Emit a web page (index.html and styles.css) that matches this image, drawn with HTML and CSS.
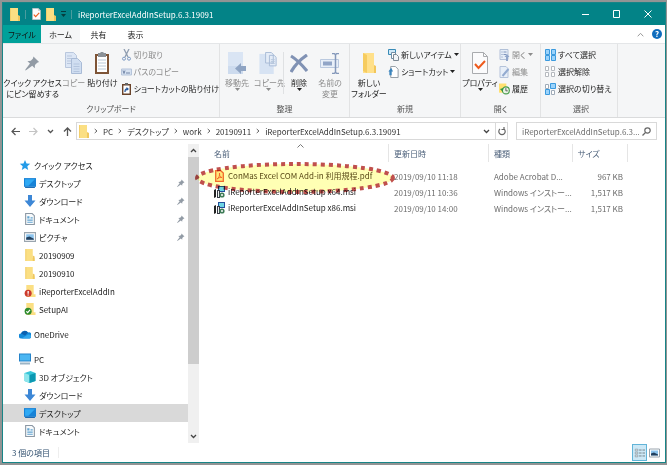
FILE: index.html
```html
<!DOCTYPE html>
<html lang="ja">
<head>
<meta charset="utf-8">
<title>iReporterExcelAddInSetup.6.3.19091</title>
<link rel="stylesheet" href="styles.css">
</head>
<body>
<svg class="defs" aria-hidden="true">
  <symbol id="folder" viewBox="0 0 10 13"><path d="M0 0h8v10h2v3H0z" fill="#fbdf83"/><path d="M8 7l2 1v5H8z" fill="#efc75e"/><path d="M0 0h1v13H0z" fill="#f3cf6c"/></symbol>
  <symbol id="pin" viewBox="0 0 16 16"><path d="M9 1l6 6-2 .6-2.400 2.400-.2 3.500L7.700 11 1.500 15.500 0 16l.8-1.600L5.300 8.600 2.600 6l3.600-.3L8.500 3.300z" fill="#929ba5"/></symbol>
  <symbol id="desktop" viewBox="0 0 11 11"><path d="M0 1h11v8H0z" fill="#1883d7"/><path d="M1 2h9L4 8H1z" fill="#2fa9f4"/><path d="M1 9h9v1H1z" fill="#0a5fae"/></symbol>
  <symbol id="down" viewBox="0 0 11 12"><path d="M3.500 0h4v5.500H11L5.500 12 0 5.500h3.500z" fill="#3d87d6"/></symbol>
  <symbol id="doc" viewBox="0 0 9 11"><path d="M.5.500h6l2 2v8h-8z" fill="#f7fafc" stroke="#8c98a4"/><path d="M2 3h2v2H2zM2 6h5v1H2zM2 8h5v1H2zM5 4h2v1H5z" fill="#62a3cf"/></symbol>
  <symbol id="picture" viewBox="0 0 11 9"><path d="M.5.500h10v8H.5z" fill="#fff" stroke="#9aa5ae"/><path d="M2 2h7v5H2z" fill="#8cc4ee"/><path d="M2 5l3-1 4 2v1H2z" fill="#23405e"/></symbol>
  <symbol id="star" viewBox="0 0 12 12"><path d="M6 1l1.500 3.500 3.700.3-2.900 2.500.9 3.700L6 9l-3.200 2 .9-3.700L.8 4.800l3.700-.3z" fill="#239be8"/></symbol>
  <symbol id="cloud" viewBox="0 0 12 9"><path d="M2.500 9A2.500 2.500 0 012 4a4 4 0 017-1 3 3 0 011.500 6z" fill="#1188d9"/><path d="M2 4a4 4 0 017-1L6 6z" fill="#0960b0"/><path d="M2.500 9L9 5a2.300 2.300 0 013 2c0 1-1 2-1.500 2z" fill="#31a8ee"/></symbol>
  <symbol id="pc" viewBox="0 0 12 11"><path d="M0 0h12v8H0z" fill="#2583c9"/><path d="M1 1h10v6H1z" fill="#4bb6f2"/><path d="M1 9h10v2H1z" fill="#9db5c6"/></symbol>
  <symbol id="cube" viewBox="0 0 11 12"><path d="M0 2l6-2 5 2v8l-6 2-5-2z" fill="#36c5d8"/><path d="M0 2l5 2v8l-5-2z" fill="#8ee6ec"/><path d="M5 4l6-2v8l-6 2z" fill="#0c98b2"/></symbol>
  <symbol id="msi" viewBox="0 0 11 12"><path d="M4 0h7v6H4z" fill="#254f9b"/><path d="M5 1h5v4H5z" fill="#6ed5e4"/><path d="M0 4l2-1v8l-2 1z" fill="#222"/><path d="M3 4h3v8H3z" fill="#353a44"/><path d="M4 5h1v6H4z" fill="#eee"/><circle cx="8" cy="9" r="2.600" fill="#3f7c58"/><circle cx="8" cy="9" r="1" fill="#fff"/></symbol>
  <symbol id="pdf" viewBox="0 0 9 12"><path d="M.7.700h5L8.300 3v8.300H.7z" fill="#ffe6a8" stroke="#f2683c" stroke-width="1.300"/><path d="M2 9c2-1 3-4 2.500-6C4 6 5.500 7.500 7 7.500 5.500 7 3.500 7.800 2 9z" fill="none" stroke="#f2683c"/></symbol>
  <symbol id="check-doc" viewBox="0 0 16 22"><path d="M.5.500h11l4 4v17H.5z" fill="#fbfbfc" stroke="#a9abae"/><path d="M11.500.500v4h4" fill="none" stroke="#a9abae"/><path d="M3 12l3.500 4L13 9" fill="none" stroke="#ee5a1c" stroke-width="2"/></symbol>
  <symbol id="copy" viewBox="0 0 17 22"><path d="M.5.500h8l3 3v12H.5z" fill="#dce6f5" stroke="#b9c7dd"/><path d="M2 4h5M2 6.500h7M2 9h4M2 11.500h4" stroke="#b9c7dd"/><path d="M6.500 6.500h6l4 4v11h-10z" fill="#d0def1" stroke="#a9bbd6"/><path d="M8.500 12h6M8.500 14.500h6M8.500 17h6M8.500 19.500h6" stroke="#b4c5de"/></symbol>
  <symbol id="paste" viewBox="0 0 16 22"><path d="M1 2h14v20H1z" fill="#7e5436"/><path d="M3 4h10v16H3z" fill="#fff"/><path d="M4 1h2l1-1h2l1 1h2v4H4z" fill="#8b9197"/><path d="M4 8h8M4 11h8M4 14h8M4 17h8" stroke="#b9c9d8"/></symbol>
  <symbol id="scissors" viewBox="0 0 9 12"><path d="M2 0l4 8M7 0L3 8" stroke="#8f9db0" stroke-width="1.300"/><circle cx="2" cy="9.700" r="1.500" fill="none" stroke="#7f9cc4"/><circle cx="7" cy="9.700" r="1.500" fill="none" stroke="#7f9cc4"/></symbol>
  <symbol id="path" viewBox="0 0 11 7"><path d="M.5.500h10v6H.5z" fill="#d6e1f0" stroke="#b5c4da"/><path d="M2 2l1 3 1-3M5 4.500h4" fill="none" stroke="#7286a7"/></symbol>
  <symbol id="shortcut-paste" viewBox="0 0 9 12"><path d="M.7 1.700h7.600v9.600H.7z" fill="#fff" stroke="#6a432a" stroke-width="1.400"/><path d="M3 0h3v2H3z" fill="#666"/><path d="M3 9c0-2 .5-3 2-3" fill="none" stroke="#24579c" stroke-width="1.300"/><path d="M4.500 4L7 6 4.500 8z" fill="#24579c"/></symbol>
  <symbol id="move" viewBox="0 0 18 22"><path d="M0 0h15v22H0z" fill="#dae5f4"/><path d="M15 14v8H0v-8z" fill="#cddbee"/><path d="M7 16.500l6-5.500v3h5v5h-5v3z" fill="#8fa4c3"/></symbol>
  <symbol id="copy-to" viewBox="0 0 18 23"><path d="M0 2h15v21H0z" fill="#d7e3f3"/><path d="M6.500.500h6l2 2v9h-8zM10.500 3.500h5l2 2v9h-7z" fill="#e4ecf7" stroke="#a8bbd6"/><path d="M12 8h4M12 10h4M12 12h4" stroke="#b6c6dc"/></symbol>
  <symbol id="delete" viewBox="0 0 18 19"><path d="M1 2c5 3 11 9 16 15M17 1C11 5 5 11 1 18" fill="none" stroke="#8092b4" stroke-width="3.200"/></symbol>
  <symbol id="rename" viewBox="0 0 20 21"><path d="M.5 6.500h18v8H.5z" fill="#e8eff8" stroke="#bac9df"/><path d="M3 8.500h9v4H3z" fill="#91a5c7"/><path d="M12 .5h2l1.500 1L17 .5h2M15.500 1v18.500M12 20.500h2l1.500-1 1.500 1h2" fill="none" stroke="#8498ba" stroke-width="1.500"/></symbol>
  <symbol id="big-folder" viewBox="0 0 13 20"><path d="M0 0h11v16l2 1v3H0z" fill="#ffe08a"/><path d="M0 0l4 2v18l-4-2z" fill="#f6cc5f"/><path d="M11 12l2 1v7h-2z" fill="#f2c65b"/></symbol>
  <symbol id="new-item" viewBox="0 0 11 12"><path d="M.5.500h7v5h-7z" fill="#cfe9f8" stroke="#398bb7"/><path d="M3.500 3.500h4v6h-4z" fill="#fff" stroke="#708da4"/><path d="M5.500 5.500h3l2 2v4h-5z" fill="#f1f4f7" stroke="#7d8994"/></symbol>
  <symbol id="new-shortcut" viewBox="0 0 11 13"><path d="M2.500.500h5l3 3v9h-8z" fill="#fff" stroke="#8c969e"/><path d="M0 6l3-4 2 4H3.500v4H1V6z" fill="#3a84bd"/></symbol>
  <symbol id="open" viewBox="0 0 10 12"><path d="M.5.500h8v10h-8z" fill="#e5edf7" stroke="#b2c1d8"/><path d="M2 3h1M4 3h3M2 5.500h1M4 5.500h3M2 8h1" stroke="#7f95bb"/><path d="M7.500 5L10 8H8.500v4h-2V8H5z" fill="#8fa5c9"/></symbol>
  <symbol id="edit" viewBox="0 0 10 12"><path d="M.5.500h6l2 2v9h-8z" fill="#e8eff8" stroke="#b4c3da"/><path d="M3 10l6-7" stroke="#93abd0" stroke-width="2"/></symbol>
  <symbol id="history" viewBox="0 0 12 12"><path d="M0 0h8v10H0z" fill="#ffe070"/><circle cx="7.500" cy="7.500" r="3.800" fill="#e8f3e5" stroke="#499c4b" stroke-width="1.300"/><path d="M7.500 5v3h2" fill="none" stroke="#555"/><path d="M1 6l4-1-1 4z" fill="#2f9640"/></symbol>
  <symbol id="all" viewBox="0 0 11 12"><path d="M.5.500h4v5h-4zM6.500.500h4v5h-4zM.5 6.500h4v5h-4zM6.500 6.500h4v5h-4z" fill="#9bd3fb" stroke="#3b9ade"/></symbol>
  <symbol id="none" viewBox="0 0 11 12"><path d="M.5.500h3v4h-3zM6.500.500h3v4h-3zM.5 6.500h3v4h-3zM6.500 6.500h3v4h-3z" fill="#fff" stroke="#b5b9be"/></symbol>
  <symbol id="invert" viewBox="0 0 11 12"><path d="M.5 1.500h3v4h-3zM6.500 7.500h3v4h-3z" fill="#fff" stroke="#9fabb8"/><path d="M5.500.500h5v5h-5zM.5 6.500h4v5h-4z" fill="#9bd3fb" stroke="#3b9ade"/></symbol>
  <symbol id="back" viewBox="0 0 9 8"><path d="M9 4H1M4.500.500L1 4l3.500 3.500" fill="none" stroke="currentColor" stroke-width="1.200"/></symbol>
  <symbol id="chev-down" viewBox="0 0 7 5"><path d="M1 1l2.500 2.500L6 1" fill="none" stroke="currentColor" stroke-width="1.300"/></symbol>
  <symbol id="chev-right" viewBox="0 0 4 6"><path d="M.7 1L3 3 .7 5" fill="none" stroke="currentColor"/></symbol>
  <symbol id="caret" viewBox="0 0 5 3"><path d="M0 0h5L2.500 3z" fill="currentColor"/></symbol>
</svg>

<div class="window">
  <header class="titlebar">
    <svg class="i-folder"><use href="#folder"/></svg>
    <span class="bar"></span>
    <svg class="i-mini-doc"><use href="#check-doc"/></svg>
    <svg class="i-folder"><use href="#folder"/></svg>
    <svg class="i-quick" viewBox="0 0 5 6"><path d="M0 0h5v1H0zM0 3h5L2.500 6z" fill="#063c3d"/></svg>
    <span class="bar"></span>
    <h1>iReporterExcelAddInSetup.6.3.19091</h1>
    <div class="caption">
      <button aria-label="最小化"><svg viewBox="0 0 8 8"><path d="M0 4.500h7" stroke="#fff"/></svg></button>
      <button aria-label="最大化"><svg viewBox="0 0 8 8"><path d="M.5.500h6v7h-6z" fill="none" stroke="#fff"/></svg></button>
      <button aria-label="閉じる"><svg viewBox="0 0 8 8"><path d="M.5.500l7 7M7.500.500l-7 7" stroke="#fff"/></svg></button>
    </div>
  </header>

  <nav class="tabs">
    <button class="tab file">ファイル</button>
    <button class="tab active">ホーム</button>
    <button class="tab">共有</button>
    <button class="tab">表示</button>
    <div class="tabs-end">
      <button aria-label="リボンの最小化"><svg class="i-collapse" viewBox="0 0 7 5"><path d="M.7 4.300l2.800-3 2.800 3" fill="none" stroke="#999"/></svg></button>
      <button class="help" aria-label="ヘルプ">?</button>
    </div>
  </nav>

  <section class="ribbon">
    <div class="group clipboard">
      <div class="tools">
        <button class="big w-pin"><span class="art"><svg class="i-pin-lg"><use href="#pin"/></svg></span>クイック アクセス<br>にピン留めする</button>
        <button class="big w-copy dim"><span class="art"><svg class="i-copy"><use href="#copy"/></svg></span>コピー</button>
        <button class="big w-large"><span class="art"><svg class="i-paste"><use href="#paste"/></svg></span>貼り付け</button>
        <div class="stack">
          <button class="dim"><svg><use href="#scissors"/></svg>切り取り</button>
          <button class="dim"><svg><use href="#path"/></svg>パスのコピー</button>
          <button><svg><use href="#shortcut-paste"/></svg>ショートカットの貼り付け</button>
        </div>
      </div>
      <h2>クリップボード</h2>
    </div>
    <div class="group organize">
      <div class="tools">
        <button class="big w-medium dim"><span class="art"><svg class="i-move"><use href="#move"/></svg></span>移動先<svg class="i-caret"><use href="#caret"/></svg></button>
        <button class="big w-small dim"><span class="art"><svg class="i-move"><use href="#copy-to"/></svg></span>コピー先<svg class="i-caret"><use href="#caret"/></svg></button>
        <span class="rule"></span>
        <button class="big w-small"><span class="art"><svg class="i-delete"><use href="#delete"/></svg></span>削除<svg class="i-caret"><use href="#caret"/></svg></button>
        <button class="big w-medium dim"><span class="art"><svg class="i-rename"><use href="#rename"/></svg></span>名前の<br>変更</button>
      </div>
      <h2>整理</h2>
    </div>
    <div class="group new">
      <div class="tools">
        <button class="big w-large"><span class="art"><svg class="i-big-folder"><use href="#big-folder"/></svg></span>新しい<br>フォルダー</button>
        <div class="stack">
          <button><svg><use href="#new-item"/></svg>新しいアイテム<svg class="i-caret"><use href="#caret"/></svg></button>
          <button><svg><use href="#new-shortcut"/></svg>ショートカット<svg class="i-caret"><use href="#caret"/></svg></button>
        </div>
      </div>
      <h2>新規</h2>
    </div>
    <div class="group open">
      <div class="tools">
        <button class="big w-large"><span class="art"><svg class="i-paste"><use href="#check-doc"/></svg></span>プロパティ<svg class="i-caret"><use href="#caret"/></svg></button>
        <div class="stack">
          <button class="dim"><svg><use href="#open"/></svg>開く<svg class="i-caret"><use href="#caret"/></svg></button>
          <button class="dim"><svg><use href="#edit"/></svg>編集</button>
          <button><svg><use href="#history"/></svg>履歴</button>
        </div>
      </div>
      <h2>開く</h2>
    </div>
    <div class="group select">
      <div class="tools">
        <div class="stack">
          <button><svg><use href="#all"/></svg>すべて選択</button>
          <button><svg><use href="#none"/></svg>選択解除</button>
          <button><svg><use href="#invert"/></svg>選択の切り替え</button>
        </div>
      </div>
      <h2>選択</h2>
    </div>
  </section>

  <div class="address">
    <div class="history">
      <button aria-label="戻る"><svg class="i-arrow"><use href="#back"/></svg></button>
      <button class="off" aria-label="進む"><svg class="i-arrow flip"><use href="#back"/></svg></button>
      <button aria-label="最近表示した場所"><svg class="i-recent"><use href="#chev-down"/></svg></button>
      <button aria-label="上へ"><svg class="i-arrow" viewBox="0 0 9 9"><path d="M4.500 9V1M1 4.500L4.500 1 8 4.500" fill="none" stroke="currentColor" stroke-width="1.300"/></svg></button>
    </div>
    <div class="path">
      <svg class="i-folder"><use href="#folder"/></svg>
      <svg class="sep"><use href="#chev-right"/></svg><a href="#">PC</a>
      <svg class="sep"><use href="#chev-right"/></svg><a href="#">デスクトップ</a>
      <svg class="sep"><use href="#chev-right"/></svg><a href="#">work</a>
      <svg class="sep"><use href="#chev-right"/></svg><a href="#">20190911</a>
      <svg class="sep"><use href="#chev-right"/></svg><a href="#">iReporterExcelAddInSetup.6.3.19091</a>
      <button class="drop" aria-label="以前の場所"><svg class="i-recent"><use href="#chev-down"/></svg></button>
      <button class="reload" aria-label="更新"><svg viewBox="0 0 8 9"><path d="M2 2a3.200 3.200 0 104 0M6 0v2.500H3.500" fill="none" stroke="#666" stroke-width="1.200"/></svg></button>
    </div>
    <label class="search">
      <input type="text" aria-label="検索" placeholder="iReporterExcelAddInSetup.6.3....">
      <svg viewBox="0 0 9 9"><circle cx="5.500" cy="3.500" r="2.700" fill="none" stroke="#666" stroke-width="1.200"/><path d="M3.500 5.500L.5 8.500" stroke="#666" stroke-width="1.300"/></svg>
    </label>
  </div>

  <main class="main">
    <aside class="tree">
      <ul>
        <li class="root"><svg><use href="#star"/></svg><span>クイック アクセス</span></li>
        <li><svg><use href="#desktop"/></svg><span>デスクトップ</span><svg class="i-pin"><use href="#pin"/></svg></li>
        <li><svg><use href="#down"/></svg><span>ダウンロード</span><svg class="i-pin"><use href="#pin"/></svg></li>
        <li><svg><use href="#doc"/></svg><span>ドキュメント</span><svg class="i-pin"><use href="#pin"/></svg></li>
        <li><svg><use href="#picture"/></svg><span>ピクチャ</span><svg class="i-pin"><use href="#pin"/></svg></li>
        <li><svg><use href="#folder"/></svg><span>20190909</span></li>
        <li><svg><use href="#folder"/></svg><span>20190910</span></li>
        <li><svg viewBox="0 0 12 13"><path d="M2 0h8v10h2v3H2z" fill="#fbdf83"/><circle cx="4" cy="9" r="3.800" fill="#cc3b2c"/><path d="M3.300 6.500h1.400v3H3.300zM3.300 10.200h1.400v1.200H3.300z" fill="#fff"/></svg><span>iReporterExcelAddIn</span></li>
        <li><svg viewBox="0 0 12 13"><path d="M2 0h8v10h2v3H2z" fill="#fbdf83"/><circle cx="4" cy="9" r="3.800" fill="#2e8b2c"/><path d="M2 9l1.500 1.500L6 7.500" fill="none" stroke="#fff" stroke-width="1.300"/></svg><span>SetupAI</span></li>
        <li class="root gap"><svg><use href="#cloud"/></svg><span>OneDrive</span></li>
        <li class="root gap"><svg><use href="#pc"/></svg><span>PC</span></li>
        <li><svg><use href="#cube"/></svg><span>3D オブジェクト</span></li>
        <li><svg><use href="#down"/></svg><span>ダウンロード</span></li>
        <li class="selected"><svg><use href="#desktop"/></svg><span>デスクトップ</span></li>
        <li><svg><use href="#doc"/></svg><span>ドキュメント</span></li>
      </ul>
      <div class="scroll">
        <svg class="i-recent flip-y"><use href="#chev-down"/></svg>
        <span class="thumb"></span>
        <svg class="i-recent"><use href="#chev-down"/></svg>
      </div>
    </aside>
    <div class="files">
      <table>
        <colgroup><col class="c-name"><col class="c-date"><col class="c-type"><col class="c-size"><col></colgroup>
        <thead><tr><th class="sorted">名前<svg class="i-sort" viewBox="0 0 7 4"><path d="M.5 3.500l3-3 3 3" fill="none" stroke="#777"/></svg></th><th>更新日時</th><th>種類</th><th>サイズ</th><td></td></tr></thead>
        <tbody>
          <tr class="marked"><td><svg><use href="#pdf"/></svg>ConMas Excel COM Add-in 利用規程.pdf</td><td>2019/09/10 11:18</td><td>Adobe Acrobat D...</td><td>967 KB</td><td></td></tr>
          <tr><td><svg><use href="#msi"/></svg>iReporterExcelAddInSetup x64.msi</td><td>2019/09/11 10:36</td><td>Windows インストー...</td><td>1,517 KB</td><td></td></tr>
          <tr><td><svg><use href="#msi"/></svg>iReporterExcelAddInSetup x86.msi</td><td>2019/09/10 14:00</td><td>Windows インストー...</td><td>1,517 KB</td><td></td></tr>
        </tbody>
      </table>
      <svg class="callout" viewBox="0 0 202 36"><ellipse cx="101" cy="18" rx="98" ry="14" fill="#ffffb4"/><ellipse class="dots" cx="101" cy="18" rx="98" ry="14"/></svg>
    </div>
  </main>

  <footer class="status">
    <span class="count">3 個の項目</span>
    <button class="view on" aria-label="詳細表示"><svg viewBox="0 0 13 12"><path d="M1.500 1.500h3v2h-3zM1.500 5h3v2h-3zM1.500 8.500h3v2h-3z" fill="#fff" stroke="#8d9da6"/><path d="M6 2.500h3M10 2.500h3M6 6h3M10 6h3M6 9.500h3M10 9.500h3" stroke="#69747b"/></svg></button>
    <button class="view" aria-label="大アイコン"><svg class="i-view"><use href="#picture"/></svg></button>
  </footer>
</div>
</body>
</html>
```
FILE: styles.css
```css
* { box-sizing: border-box; }
html, body { margin: 0; height: 100%; }
body {
  font-family: "Noto Sans CJK JP", sans-serif;
  font-size: 8px;
  line-height: 11px;
  font-feature-settings: "palt";
  color: #222;
  background: #929494;
  padding: 2px 1px 2px 2px;
}
button, input { font: inherit; font-feature-settings: inherit; color: inherit; background: none; border: 0; padding: 0; margin: 0; }
h1, h2, ul { margin: 0; padding: 0; font-weight: normal; }
a { color: inherit; text-decoration: none; }
svg { display: block; flex: none; }
.defs { position: absolute; width: 0; height: 0; }

.window { height: 100%; display: flex; flex-direction: column; background: #fff; border: 1px solid #178587; }

.i-folder { width: 10px; height: 13px; }
.i-mini-doc { width: 9px; height: 12px; }
.i-quick { width: 5px; height: 6px; }
.i-caret { width: 5px; height: 3px; }
.i-recent { width: 7px; height: 5px; }
.i-arrow { width: 9px; height: 9px; }
.flip { transform: scaleX(-1); }
.flip-y { transform: scaleY(-1); }

.titlebar { flex: none; height: 22px; display: flex; align-items: center; gap: 5px; padding: 0 2px 0 7px; background: #038387; color: #fff; }
.titlebar h1 { font-size: 8px; }
.bar { width: 1px; height: 9px; margin-right: 1px; background: #4a9c9e; }
.caption { margin-left: auto; display: flex; }
.caption button { width: 31px; height: 22px; display: grid; place-items: center; }
.caption svg { width: 8px; height: 8px; }

.tabs { flex: none; height: 18px; display: flex; }
.tab { width: 37px; height: 18px; }
.tab.file { width: 38px; background: #00a19a; color: #111; }
.tab.active { background: #f5f6f7; width: 39px; }
.tabs-end { margin-left: auto; display: flex; align-items: center; gap: 8px; padding-right: 3px; }
.i-collapse { width: 7px; height: 5px; }
.help { width: 10px; height: 10px; border-radius: 50%; background: #0f6cbd; color: #fff; font-weight: bold; line-height: 10px; }

.ribbon { flex: none; height: 75px; display: flex; background: #f5f6f7; border-top: 1px solid #e4e6e8; border-bottom: 1px solid #dadbdc; }
.group { display: flex; flex-direction: column; border-right: 1px solid #e2e3e4; padding-bottom: 3px; }
.group h2 { margin-top: auto; font-size: 8px; text-align: center; color: #555; }
.clipboard { width: 217px; }
.organize { width: 130px; }
.new { width: 111px; }
.open { width: 80px; }
.select { width: 77px; padding-left: 4px; }
.tools { display: flex; }
.big { align-self: flex-start; padding-top: 5px; text-align: center; white-space: nowrap; }
.big .i-caret { margin: 0 auto; }
.art { display: grid; place-items: center; height: 28px; }
.w-pin { width: 62px; }
.w-copy { width: 22px; }
.w-large { width: 38px; }
.w-medium { width: 34px; }
.w-small { width: 28px; }
.dim { color: #8c8c8c; }
.rule { width: 1px; height: 42px; margin: 8px 1px 0; background: #dfe1e3; }
.i-pin-lg { width: 15px; height: 16px; }
.i-copy { width: 17px; height: 22px; }
.i-paste { width: 16px; height: 22px; }
.i-move { width: 18px; height: 22px; }
.i-delete { width: 18px; height: 19px; }
.i-rename { width: 20px; height: 21px; }
.i-big-folder { width: 13px; height: 20px; }
.stack { padding-top: 2px; }
.stack button { display: flex; align-items: center; gap: 2px; height: 17px; white-space: nowrap; }
.stack svg { width: 11px; height: 12px; }
.stack .i-caret { width: 5px; height: 3px; }

.address { flex: none; display: flex; align-items: center; height: 26px; padding: 0 8px; gap: 8px; }
.history { display: flex; align-items: center; gap: 9px; width: 57px; color: #555; }
.history .off { color: #c4c4c4; }
.path { flex: 1; display: flex; align-items: center; gap: 5px; height: 18px; border: 1px solid #d9d9d9; padding-left: 2px; color: #333; white-space: nowrap; }
.sep { width: 4px; height: 6px; color: #666; }
.drop { margin-left: auto; color: #444; }
.reload { align-self: stretch; display: grid; place-items: center; width: 12px; border-left: 1px solid #d9d9d9; }
.reload svg { width: 8px; height: 9px; }
.search { width: 141px; height: 18px; display: flex; align-items: center; gap: 3px; border: 1px solid #d9d9d9; padding: 0 5px; }
.search input { flex: 1; min-width: 0; outline: 0; }
.search input::placeholder { color: #6d6d6d; }
.search svg { width: 9px; height: 9px; }

.main { flex: 1; min-height: 0; display: flex; }
.tree { flex: none; width: 196px; display: flex; }
.tree ul { flex: 1; list-style: none; padding-top: 12px; }
.tree li { display: flex; align-items: center; gap: 3px; height: 18px; padding: 0 3px 0 21px; }
.tree li.root { padding-left: 16px; }
.tree li.gap { margin-top: 7px; }
.tree li svg { width: 12px; height: 12px; }
.tree li .i-pin { width: 8px; height: 8px; margin-left: auto; }
.tree li.selected { background: #d9d9d9; }
.scroll { width: 11px; display: flex; flex-direction: column; align-items: center; justify-content: space-between; background: #f0f0f0; padding: 4px 0; color: #444; }
.thumb { flex: 1; width: 11px; margin: 4px 0 70px; background: #cdcdcd; }

.files { flex: 1; position: relative; }
table { width: 100%; table-layout: fixed; border-collapse: separate; border-spacing: 0; white-space: nowrap; }
.c-name { width: 190px; }
.c-date { width: 100px; }
.c-type { width: 84px; }
.c-size { width: 55px; }
th { height: 18px; padding: 0 5px; text-align: left; font-weight: normal; color: #4c607a; border-right: 1px solid #e5e5e5; }
th:first-child { padding-left: 15px; }
.sorted { position: relative; }
.i-sort { position: absolute; top: 0; left: 98px; width: 7px; height: 4px; }
tbody { color: #6d6d6d; }
tbody::before { content: ""; display: block; height: 6px; }
tbody td { height: 16px; padding: 0 5px; }
tbody td:first-child { color: #222; padding-left: 15px; }
tbody .marked td:first-child { color: #5a4a20; }
td:nth-child(4) { text-align: right; }
td svg { display: inline-block; vertical-align: middle; width: 11px; height: 12px; margin-right: 3px; }
.callout { position: absolute; top: 16px; left: -5px; width: 202px; height: 36px; mix-blend-mode: multiply; pointer-events: none; }
.dots { fill: none; stroke: #c0504d; stroke-width: 4; stroke-dasharray: 4 4; }

.status { flex: none; height: 19px; display: flex; align-items: center; padding: 0 3px 0 9px; color: #31506f; }
.count { padding-right: 8px; border-right: 1px solid #eee; margin-right: auto; }
.view { width: 15px; height: 17px; display: grid; place-items: center; }
.view.on { background: #cce8f6; border: 1px solid #62b4d8; }
.view svg { width: 11px; height: 12px; }
```
